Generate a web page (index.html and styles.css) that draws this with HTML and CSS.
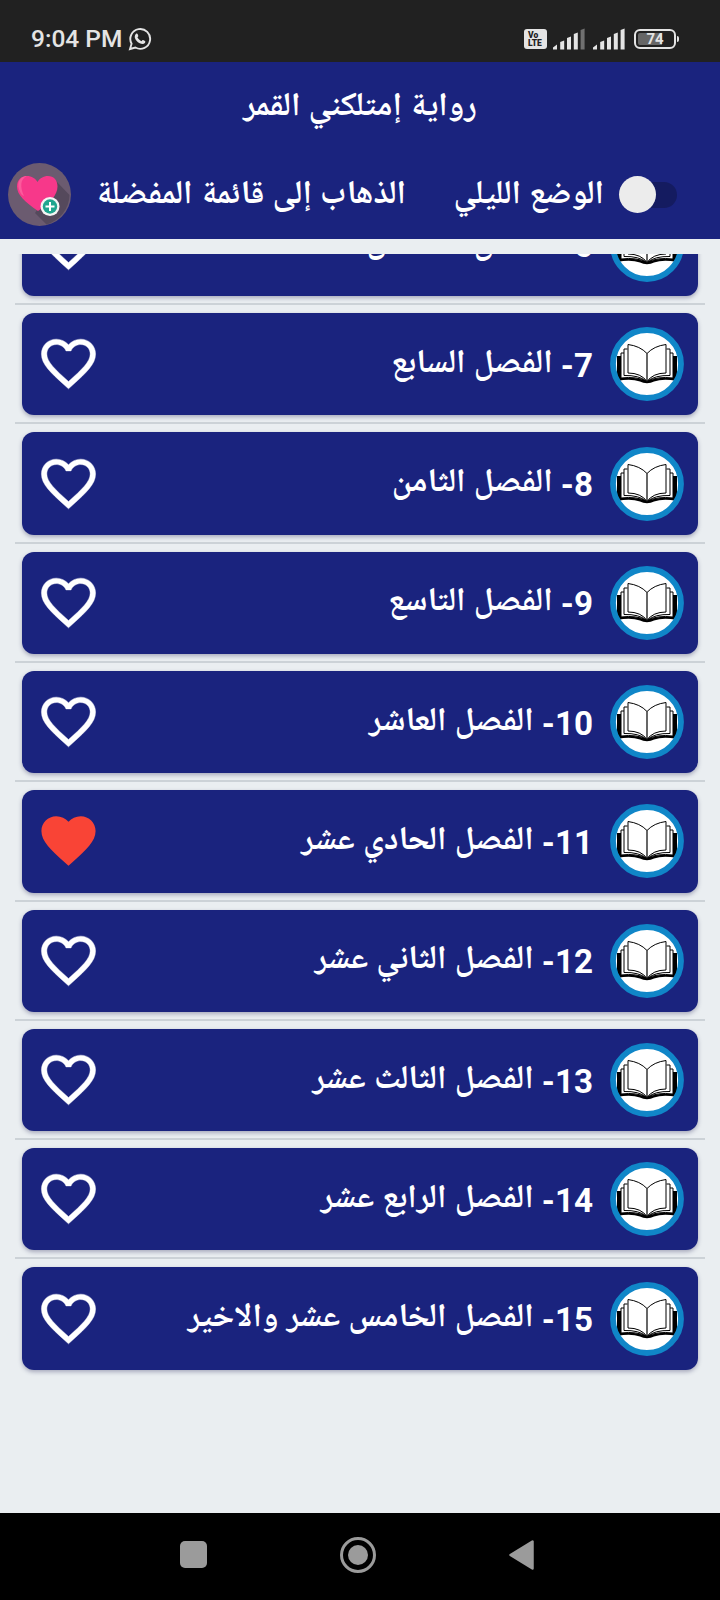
FILE: index.html
```html
<!DOCTYPE html>
<html lang="ar">
<head>
  <meta charset="UTF-8">
  <title>رواية إمتلكني القمر</title>
  <link rel="stylesheet" href="styles.css">
</head>
<body>

  <!-- Shared icons -->
  <svg class="sprite">
    <symbol id="heart" viewBox="0 0 24 24">
      <path d="M16.5 3c-1.74 0-3.41.81-4.5 2.09C10.91 3.81 9.24 3 7.5 3 4.42 3 2 5.42 2 8.5c0 3.78 3.4 6.86 8.55 11.54L12 21.35l1.45-1.32C18.6 15.36 22 12.28 22 8.5 22 5.42 19.58 3 16.5 3zm-4.4 15.55l-.1.1-.1-.1C7.14 14.24 4 11.39 4 8.5 4 6.5 5.5 5 7.5 5c1.54 0 3.04.99 3.57 2.36h1.87C13.46 5.99 14.96 5 16.5 5c2 0 3.5 1.5 3.5 3.5 0 2.89-3.14 5.74-7.9 10.05z"/>
    </symbol>
    <symbol id="heart-full" viewBox="0 0 24 24">
      <path d="M12 21.35l-1.45-1.32C5.4 15.36 2 12.28 2 8.5 2 5.42 4.42 3 7.5 3c1.74 0 3.41.81 4.5 2.09C13.09 3.81 14.76 3 16.5 3 19.58 3 22 5.42 22 8.5c0 3.78-3.4 6.86-8.55 11.54L12 21.35z"/>
    </symbol>
    <symbol id="book" viewBox="0 0 74 74">
      <circle cx="37" cy="37" r="34" fill="#fff"/>
      <path d="M7 29h4v22q15-1.500 26 3 11-4.500 26-3V29h4v25q-14-2.500-23 .5-3 1.800-7 1.800t-7-1.800q-9-3-23-.5z"/>
      <g fill="none" stroke="#000" stroke-width="1">
        <path d="M14 26h-3v25q16-2 26 3.500Q47 49 63 51V26h-3"/>
        <path d="M17.500 22H14v26.500q15-.5 23 6 8-6.500 23-6V22h-3.500"/>
        <path d="M18 45q13 .5 19 9 6-8.500 19-9"/>
        <path d="M37 26.500Q30 19 18 17.500V46q13 0 19 8.500Q43 46 56 46V17.500Q44 19 37 26.500z" fill="#fff"/>
        <path d="M37 26.500v28" stroke-width="1.200"/>
      </g>
      <circle cx="37" cy="37" r="34" fill="none" stroke="#1086c8" stroke-width="5.800"/>
    </symbol>
  </svg>

  <div class="status-bar">
    <span class="time">9:04 PM</span>
    <svg class="whatsapp" width="24" height="24" viewBox="0 0 24 24">
      <path d="M2 22l1.600-5.300A9.900 9.900 0 1 1 7.400 20.500z" fill="none" stroke="#e4e4e4" stroke-width="1.900"/>
      <path d="M8.300 6.600c.6-.3 1-.1 1.300.5l.7 1.600c.1.500-.4 1.100-.9 1.600.9 1.800 2.300 3.100 4.200 3.900.6-.6 1-1.300 1.500-1.100l1.900.9c.6.400.3 1.400-.1 2-1.300 1.500-3.300 1.100-5.200.2-2.500-1.200-4.400-3.400-4.900-5.700-.2-1.600.6-3.300 1.500-3.900z" fill="#e4e4e4"/>
    </svg>
    <div class="status-icons">
      <div class="volte"><span>Vo</span><span>LTE</span></div>
      <svg class="signal" width="33" height="22" viewBox="0 0 33 22" fill="#e4e4e4">
        <path d="M0 21.500v-2l4-3v5zM7.200 21.500V14l4-1.500v9zM14 21.500V10l4-1.500v13zM20.800 21.500V6l4-1.500v17z"/>
        <path d="M27.600 21.500V2l4-1.500v21z" fill="#707070"/>
      </svg>
      <svg class="signal" width="33" height="22" viewBox="0 0 33 22" fill="#e4e4e4">
        <path d="M0 21.500v-2l4-3v5zM7.200 21.500V14l4-1.500v9zM14 21.500V10l4-1.500v13zM20.800 21.500V6l4-1.500v17zM27.600 21.500V2l4-1.500v21z"/>
      </svg>
      <div class="battery">74</div>
      <div class="battery-tip"></div>
    </div>
  </div>

  <header class="header">
    <h1 class="title" dir="rtl">رواية إمتلكني القمر</h1>
    <div class="toolbar">
      <svg class="fav-button" width="63" height="63" viewBox="0 0 63 63">
        <circle cx="31.500" cy="31.500" r="31.500" fill="#6b5b70"/>
        <path d="M48 18l13.500 14a31.500 31.500 0 0 1-23 29.500L27 50z" fill="#55495c"/>
        <path d="M30 48C17 39 9 32 9 23.500 9 17 13.500 13 19 13c4.500 0 8.500 2.500 10.500 6C31.500 15.500 35.500 13 40 13c5.500 0 9.500 4 9.500 10.500C49.500 32 42 40 30 48z" fill="#f7388a"/>
        <path d="M14 32C7 22 11 13 19 13c-7 3-7 11-3 20z" fill="#fb5a9c"/>
        <circle cx="42" cy="43.500" r="9.500" fill="#f4f4f4"/>
        <circle cx="42" cy="43.500" r="7.200" fill="#1fa58f"/>
        <path d="M42 39v9M37.500 43.500h9" stroke="#fff" stroke-width="2"/>
      </svg>
      <span class="label label-fav" dir="rtl">الذهاب إلى قائمة المفضلة</span>
      <span class="label label-night" dir="rtl">الوضع الليلي</span>
      <div class="switch"><div class="thumb"></div></div>
    </div>
  </header>

  <main class="list">
    <div class="row"><div class="card"><svg class="heart"><use href="#heart"/></svg><span class="chapter" dir="rtl">6- الفصل السادس</span><svg class="book"><use href="#book"/></svg></div></div>
    <div class="row"><div class="card"><svg class="heart"><use href="#heart"/></svg><span class="chapter" dir="rtl">7- الفصل السابع</span><svg class="book"><use href="#book"/></svg></div></div>
    <div class="row"><div class="card"><svg class="heart"><use href="#heart"/></svg><span class="chapter" dir="rtl">8- الفصل الثامن</span><svg class="book"><use href="#book"/></svg></div></div>
    <div class="row"><div class="card"><svg class="heart"><use href="#heart"/></svg><span class="chapter" dir="rtl">9- الفصل التاسع</span><svg class="book"><use href="#book"/></svg></div></div>
    <div class="row"><div class="card"><svg class="heart"><use href="#heart"/></svg><span class="chapter" dir="rtl">10- الفصل العاشر</span><svg class="book"><use href="#book"/></svg></div></div>
    <div class="row"><div class="card"><svg class="heart liked"><use href="#heart-full"/></svg><span class="chapter" dir="rtl">11- الفصل الحادي عشر</span><svg class="book"><use href="#book"/></svg></div></div>
    <div class="row"><div class="card"><svg class="heart"><use href="#heart"/></svg><span class="chapter" dir="rtl">12- الفصل الثاني عشر</span><svg class="book"><use href="#book"/></svg></div></div>
    <div class="row"><div class="card"><svg class="heart"><use href="#heart"/></svg><span class="chapter" dir="rtl">13- الفصل الثالث عشر</span><svg class="book"><use href="#book"/></svg></div></div>
    <div class="row"><div class="card"><svg class="heart"><use href="#heart"/></svg><span class="chapter" dir="rtl">14- الفصل الرابع عشر</span><svg class="book"><use href="#book"/></svg></div></div>
    <div class="row"><div class="card"><svg class="heart"><use href="#heart"/></svg><span class="chapter" dir="rtl">15- الفصل الخامس عشر والاخير</span><svg class="book"><use href="#book"/></svg></div></div>
  </main>

  <nav class="nav-bar">
    <svg width="27" height="27" viewBox="0 0 27 27"><rect width="27" height="27" rx="5" fill="#9b9b9b"/></svg>
    <svg width="36" height="36" viewBox="0 0 36 36"><circle cx="18" cy="18" r="16.500" fill="none" stroke="#9b9b9b" stroke-width="3"/><circle cx="18" cy="18" r="10" fill="#9b9b9b"/></svg>
    <svg width="25" height="30" viewBox="0 0 25 30"><path d="M1.500 15L23.500 1.500v27z" fill="#9b9b9b" stroke="#9b9b9b" stroke-width="2.500" stroke-linejoin="round"/></svg>
  </nav>

</body>
</html>
```
FILE: styles.css
```css
* {
  box-sizing: border-box;
}

body {
  margin: 0;
  width: 720px;
  height: 1600px;
  display: flex;
  flex-direction: column;
  overflow: hidden;
  background: #eaeef1;
  color: #fff;
  font-family: Roboto, "Noto Naskh Arabic UI", "Noto Naskh Arabic", "Noto Sans", sans-serif;
}

svg {
  display: block;
  flex: none;
}

.sprite {
  display: none;
}

/* Status bar */
.status-bar {
  flex: none;
  height: 62px;
  padding: 15px 41px 0 31px;
  display: flex;
  align-items: center;
  background: #212121;
  color: #e4e4e4;
}

.time {
  width: 97px;
  font-size: 24.5px;
  font-weight: 500;
  white-space: nowrap;
}

.status-icons {
  margin-left: auto;
  display: flex;
  align-items: center;
}

.volte {
  width: 23px;
  height: 20px;
  margin-right: 6px;
  padding: 2px 0 0 4px;
  border-radius: 3px;
  background: #e4e4e4;
  color: #212121;
  font-size: 8.5px;
  font-weight: 900;
  line-height: 8px;
  display: flex;
  flex-direction: column;
}

.signal {
  margin-right: 7px;
}

.battery {
  width: 42px;
  height: 20px;
  margin-left: 1px;
  padding: 2px;
  border: 2px solid #e4e4e4;
  border-radius: 6px;
  background: linear-gradient(90deg, #666 70%, #212121 70%) content-box;
  font-size: 15px;
  font-weight: 700;
  line-height: 13px;
  text-align: center;
}

.battery-tip {
  width: 2px;
  height: 6px;
  margin-left: 1px;
  border-radius: 0 2px 2px 0;
  background: #e4e4e4;
}

/* Header */
.header {
  flex: none;
  height: 177px;
  background: #1a237e;
}

.title {
  margin: 0;
  height: 88px;
  padding-top: 3px;
  font-size: 33.2px;
  font-weight: 700;
  line-height: 88px;
  text-align: center;
}

.toolbar {
  height: 89px;
  padding-left: 8px;
  display: flex;
  align-items: center;
}

.label {
  padding-top: 4px;
  font-size: 33.1px;
  font-weight: 700;
  line-height: 40px;
  white-space: nowrap;
}

.label-fav {
  width: 307px;
  margin-left: 28px;
}

.label-night {
  width: 149px;
  margin-left: 49px;
}

.switch {
  width: 58px;
  height: 26px;
  margin-left: 15px;
  border-radius: 13px;
  background: #141b60;
  display: flex;
  align-items: center;
}

.thumb {
  width: 37px;
  height: 37px;
  flex: none;
  border-radius: 50%;
  background: #ececec;
}

/* Chapter list, scrolled so the first row is cut by the top edge */
.list {
  flex: 1;
  min-height: 0;
  margin-top: 15px;
  padding: 0 15px;
  overflow: hidden;
  display: flex;
  flex-direction: column;
  justify-content: flex-start;
}

.row {
  flex: none;
  height: 119.3px;
  padding: 8px 7px 0;
  border-top: 2px solid #ccd2d7;
}

.row:first-child {
  margin-top: -70.2px;
}

.card {
  height: 102.3px;
  padding: 0 14.5px 0 14px;
  border-radius: 12px;
  background: #1a237e;
  box-shadow: 0 2px 4px rgba(40, 40, 90, 0.35);
  display: flex;
  align-items: center;
}

.heart {
  width: 65px;
  height: 65px;
  margin-bottom: 1px;
  fill: #fff;
  stroke: #fff;
  stroke-width: 0.15;
}

.liked {
  fill: #f94436;
  stroke: none;
}

.chapter {
  flex: 1;
  margin-right: 16.5px;
  padding-top: 3px;
  font-size: 33.2px;
  font-weight: 700;
  line-height: 40px;
  white-space: nowrap;
}

.book {
  width: 74px;
  height: 74px;
}

/* Navigation buttons */
.nav-bar {
  flex: none;
  height: 87px;
  padding: 0 186px 4px 180px;
  display: flex;
  align-items: center;
  justify-content: space-between;
  background: #000;
}
```
